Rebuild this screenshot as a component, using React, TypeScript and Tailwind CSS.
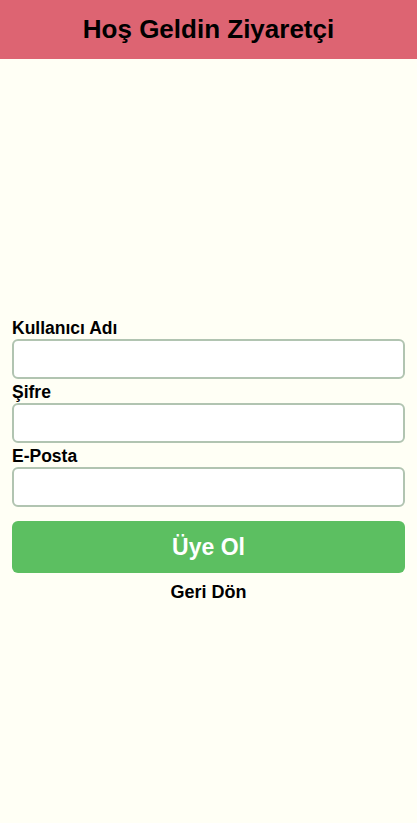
export default function App() {
  return (
    <div className="min-h-[823px] bg-[#fffff5] font-['Liberation_Sans',Arial,sans-serif]">
      {/* Header */}
      <header className="flex h-[59px] items-center justify-center bg-[#dd6472]">
        <h1 className="text-[26px] font-bold text-black">Hoş Geldin Ziyaretçi</h1>
      </header>

      {/* Form */}
      <main className="px-3 pt-[256px]">
        <label className="mt-[2px] block text-[17.5px] leading-[22px] font-bold text-black">Kullanıcı Adı</label>
        <input type="text" className="block h-[40px] w-full rounded-md border-2 border-[#b1c4b1] bg-white" />
        <label className="mt-[2px] block text-[17.5px] leading-[22px] font-bold text-black">Şifre</label>
        <input type="password" className="block h-[40px] w-full rounded-md border-2 border-[#b1c4b1] bg-white" />
        <label className="mt-[2px] block text-[17.5px] leading-[22px] font-bold text-black">E-Posta</label>
        <input type="email" className="block h-[40px] w-full rounded-md border-2 border-[#b1c4b1] bg-white" />
        <button className="mt-[14px] flex h-[52px] w-full items-center justify-center rounded-md bg-[#5cbf61] text-[23px] font-bold text-white">
          Üye Ol
        </button>
        <div className="mt-[8px] text-center text-[18px] leading-[22px] font-bold text-black">Geri Dön</div>
      </main>
    </div>
  );
}
